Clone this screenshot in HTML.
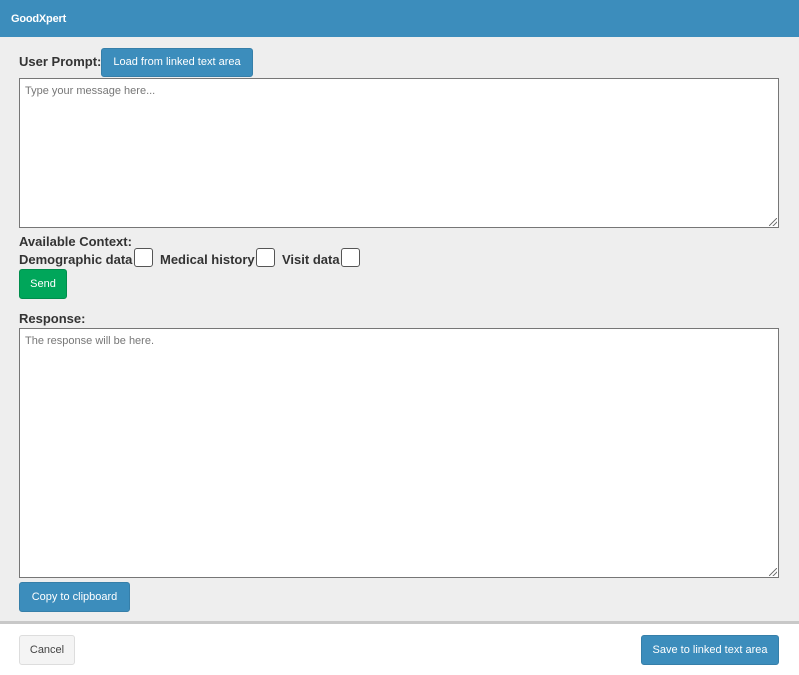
<!DOCTYPE html>
<html><head><meta charset="utf-8"><style>
*{box-sizing:border-box;margin:0;padding:0}
body{width:799px;height:675px;background:#fff;font-family:"Liberation Sans",sans-serif;position:relative;overflow:hidden}
.a{position:absolute}
.hdr{left:0;top:0;width:799px;height:37px;background:#3c8dbc;color:#fff;font-weight:bold;font-size:11px;padding:13px 0 0 11px;letter-spacing:-0.2px}
.body{left:0;top:37px;width:799px;height:584px;background:#eee}
.sep{left:0;top:621px;width:799px;height:3px;background:#c8c8c8}
.lbl{font-weight:bold;font-size:13px;color:#333}
.btn{color:#fff;font-size:11px;text-align:center;border-radius:3px;background:#3c8dbc;border:1px solid #367fa9;line-height:27px;white-space:nowrap}
.ta{background:#fff;border:1px solid #767676;font-size:11px;color:#777;padding:6px 5px}
.cb{width:19px;height:19px;border:1px solid #555;border-radius:3px;background:#fff}
.grip{right:1px;bottom:1px;width:8px;height:8px;background:linear-gradient(135deg,transparent 45%,#777 46%,#777 54%,transparent 55%,transparent 70%,#777 71%,#777 79%,transparent 80%)}
</style></head><body>
<div class="a hdr">GoodXpert</div>
<div class="a body"></div>
<div class="a lbl" style="left:19px;top:54px">User Prompt:</div>
<div class="a btn" style="left:101px;top:48px;width:152px;height:29px">Load from linked text area</div>
<div class="a ta" style="left:19px;top:78px;width:760px;height:150px">Type your message here...<div class="a grip"></div></div>
<div class="a lbl" style="left:19px;top:234px">Available Context:</div>
<div class="a lbl" style="left:19px;top:252px">Demographic data</div>
<div class="a cb" style="left:134px;top:248px"></div>
<div class="a lbl" style="left:160px;top:252px">Medical history</div>
<div class="a cb" style="left:256px;top:248px"></div>
<div class="a lbl" style="left:282px;top:252px">Visit data</div>
<div class="a cb" style="left:341px;top:248px"></div>
<div class="a btn" style="left:19px;top:269px;width:48px;height:30px;background:#00a65a;border-color:#008d4c;line-height:28px">Send</div>
<div class="a lbl" style="left:19px;top:311px">Response:</div>
<div class="a ta" style="left:19px;top:328px;width:760px;height:250px">The response will be here.<div class="a grip"></div></div>
<div class="a btn" style="left:19px;top:582px;width:111px;height:30px;line-height:28px">Copy to clipboard</div>
<div class="a sep"></div>
<div class="a btn" style="left:19px;top:635px;width:56px;height:30px;line-height:28px;background:#f4f4f4;border-color:#ddd;color:#444">Cancel</div>
<div class="a btn" style="left:641px;top:635px;width:138px;height:30px;line-height:28px">Save to linked text area</div>
</body></html>
